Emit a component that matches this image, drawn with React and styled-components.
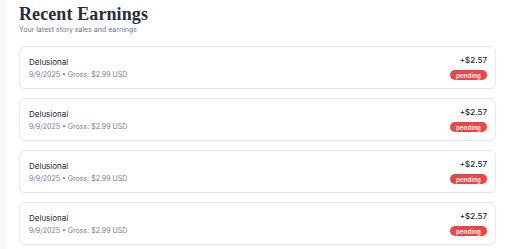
import React from "react";
import styled, { createGlobalStyle } from "styled-components";

const Global = createGlobalStyle`
  html, body { margin: 0; padding: 0; background: #f6f7f9; }
  body { font-family: Inter, "Noto Sans", sans-serif; }
`;

const Shell = styled.div`
  display: flex;
  min-height: 249px;
  width: 508px;
  overflow: hidden;
`;

const Rail = styled.div`
  width: 6px;
  flex: none;
  background: #f6f7f9;
`;

const Main = styled.main`
  flex: 1;
  background: #ffffff;
  padding: 4px 12px 0 13px;
  box-sizing: border-box;
`;

const Title = styled.h2`
  margin: 0;
  font-family: "Liberation Serif", "Times New Roman", serif;
  font-weight: 700;
  font-size: 18px;
  line-height: 20px;
  color: #272c38;
  letter-spacing: 0.1px;
`;

const Subtitle = styled.p`
  margin: 1px 0 0;
  font-size: 7px;
  line-height: 9px;
  color: #6b7689;
`;

const List = styled.div`
  display: flex;
  flex-direction: column;
  gap: 9px;
  margin-top: 12px;
`;

const Card = styled.div`
  display: flex;
  align-items: center;
  justify-content: space-between;
  height: 43px;
  box-sizing: border-box;
  padding: 0 8px 0 9px;
  border: 1px solid #e6e8ee;
  border-radius: 6px;
  background: #fff;
  box-shadow: 0 1px 2px rgba(16, 24, 40, 0.03);
`;

const Left = styled.div`
  display: flex;
  flex-direction: column;
  gap: 2px;
`;

const Name = styled.div`
  font-size: 8px;
  line-height: 11px;
  color: #1f2533;
  font-weight: 400;
`;

const Meta = styled.div`
  font-size: 7px;
  line-height: 9px;
  color: #74809a;
`;

const Right = styled.div`
  display: flex;
  flex-direction: column;
  align-items: flex-end;
  gap: 4px;
`;

const Amount = styled.div`
  font-size: 8px;
  line-height: 11px;
  font-weight: 500;
  color: #1f2533;
`;

const Badge = styled.span`
  display: inline-flex;
  align-items: center;
  justify-content: center;
  height: 10px;
  padding: 0 6px;
  border-radius: 5px;
  background: ${(p) => (p.$status === "pending" ? "#ef4444" : "#16a34a")};
  color: #fff;
  font-size: 6px;
  font-weight: 600;
  letter-spacing: 0.2px;
`;

const earnings = Array.from({ length: 4 }, (_, i) => ({
  id: i,
  title: "Delusional",
  date: "9/9/2025",
  gross: "$2.99 USD",
  net: "+$2.57",
  status: "pending",
}));

export default function App() {
  return (
    <>
      <Global />
      <Shell>
        <Rail />
        <Main>
          <Title>Recent Earnings</Title>
          <Subtitle>Your latest story sales and earnings</Subtitle>
          <List>
            {earnings.map((e) => (
              <Card key={e.id}>
                <Left>
                  <Name>{e.title}</Name>
                  <Meta>
                    {e.date} • Gross: {e.gross}
                  </Meta>
                </Left>
                <Right>
                  <Amount>{e.net}</Amount>
                  <Badge $status={e.status}>{e.status}</Badge>
                </Right>
              </Card>
            ))}
          </List>
        </Main>
      </Shell>
    </>
  );
}
